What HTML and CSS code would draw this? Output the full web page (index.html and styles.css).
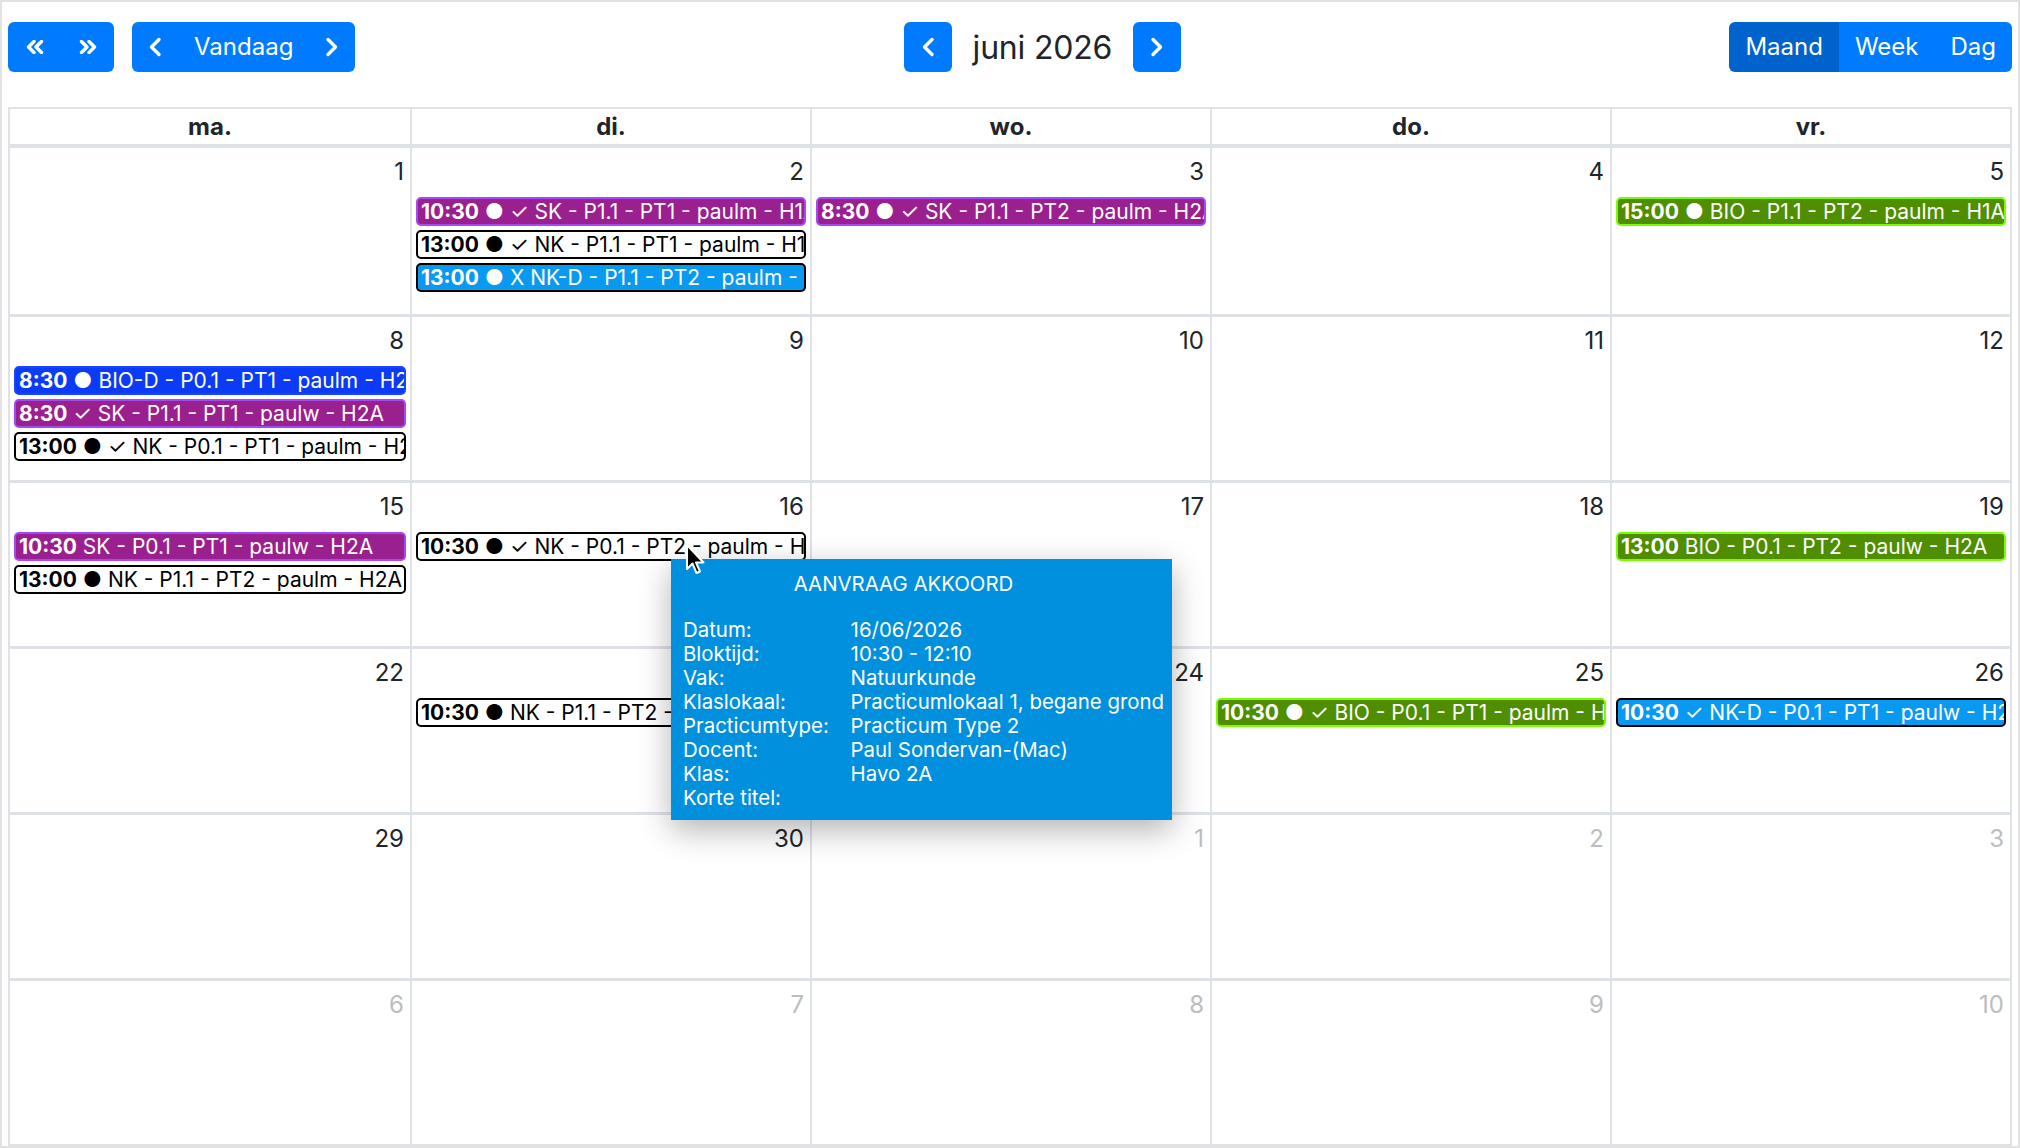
FILE: index.html
```html
<!DOCTYPE html>
<html lang="nl">
<head>
    <meta charset="UTF-8">
    <meta name="viewport" content="width=device-width, initial-scale=1.0">
    <title>Practicumplanner - juni 2026</title>
    <link rel="stylesheet" href="styles.css">
</head>
<body>
    <div class="page">
        <!-- Toolbar -->
        <div class="toolbar">
            <div class="btn-group">
                <button class="btn btn-icon" title="Vorig jaar">
                    <svg width="18" height="14" viewBox="0 0 18 14"><polyline points="8,1.5 2.5,7 8,12.5"/><polyline points="15.5,1.5 10,7 15.5,12.5"/></svg>
                </button>
                <button class="btn btn-icon" title="Volgend jaar">
                    <svg width="18" height="14" viewBox="0 0 18 14"><polyline points="2.5,1.5 8,7 2.5,12.5"/><polyline points="10,1.5 15.5,7 10,12.5"/></svg>
                </button>
            </div>
            <div class="btn-group group-today">
                <button class="btn btn-icon" title="Vorige">
                    <svg width="14" height="20" viewBox="0 0 14 20"><polyline points="11,2.5 3.5,10 11,17.5"/></svg>
                </button>
                <button class="btn">Vandaag</button>
                <button class="btn btn-icon" title="Volgende">
                    <svg width="14" height="20" viewBox="0 0 14 20"><polyline points="3,2.5 10.5,10 3,17.5"/></svg>
                </button>
            </div>

            <div class="title-bar">
                <button class="btn btn-icon btn-single" title="Vorige maand">
                    <svg width="14" height="20" viewBox="0 0 14 20"><polyline points="11,2.5 3.5,10 11,17.5"/></svg>
                </button>
                <h2 class="title">juni 2026</h2>
                <button class="btn btn-icon btn-single" title="Volgende maand">
                    <svg width="14" height="20" viewBox="0 0 14 20"><polyline points="3,2.5 10.5,10 3,17.5"/></svg>
                </button>
            </div>

            <div class="btn-group">
                <button class="btn active">Maand</button>
                <button class="btn">Week</button>
                <button class="btn">Dag</button>
            </div>
        </div>

        <!-- Month grid -->
        <div class="month">
            <div class="head">
                <div class="head-cell">ma.</div>
                <div class="head-cell">di.</div>
                <div class="head-cell">wo.</div>
                <div class="head-cell">do.</div>
                <div class="head-cell">vr.</div>
            </div>

            <div class="week">
                <div class="day"><div class="num">1</div></div>
                <div class="day"><div class="num">2</div>
                    <div class="event ev-purple"><b>10:30</b> ● ✓ SK - P1.1 - PT1 - paulm - H1A</div>
                    <div class="event ev-white"><b>13:00</b> ● ✓ NK - P1.1 - PT1 - paulm - H1A</div>
                    <div class="event ev-sky"><b>13:00</b> ● X NK-D - P1.1 - PT2 - paulm - H1A</div>
                </div>
                <div class="day"><div class="num">3</div>
                    <div class="event ev-purple"><b>8:30</b> ● ✓ SK - P1.1 - PT2 - paulm - H2A</div>
                </div>
                <div class="day"><div class="num">4</div></div>
                <div class="day"><div class="num">5</div>
                    <div class="event ev-green"><b>15:00</b> ● BIO - P1.1 - PT2 - paulm - H1A</div>
                </div>
            </div>

            <div class="week">
                <div class="day"><div class="num">8</div>
                    <div class="event ev-blue"><b>8:30</b> ● BIO-D - P0.1 - PT1 - paulm - H2A</div>
                    <div class="event ev-purple"><b>8:30</b> ✓ SK - P1.1 - PT1 - paulw - H2A</div>
                    <div class="event ev-white"><b>13:00</b> ● ✓ NK - P0.1 - PT1 - paulm - H2A</div>
                </div>
                <div class="day"><div class="num">9</div></div>
                <div class="day"><div class="num">10</div></div>
                <div class="day"><div class="num">11</div></div>
                <div class="day"><div class="num">12</div></div>
            </div>

            <div class="week">
                <div class="day"><div class="num">15</div>
                    <div class="event ev-purple"><b>10:30</b> SK - P0.1 - PT1 - paulw - H2A</div>
                    <div class="event ev-white"><b>13:00</b> ● NK - P1.1 - PT2 - paulm - H2A</div>
                </div>
                <div class="day"><div class="num">16</div>
                    <div class="event ev-white"><b>10:30</b> ● ✓ NK - P0.1 - PT2 - paulm - H2A</div>
                </div>
                <div class="day"><div class="num">17</div></div>
                <div class="day"><div class="num">18</div></div>
                <div class="day"><div class="num">19</div>
                    <div class="event ev-green"><b>13:00</b> BIO - P0.1 - PT2 - paulw - H2A</div>
                </div>
            </div>

            <div class="week">
                <div class="day"><div class="num">22</div></div>
                <div class="day"><div class="num">23</div>
                    <div class="event ev-white"><b>10:30</b> ● NK - P1.1 - PT2 - paulm - H2A</div>
                </div>
                <div class="day"><div class="num">24</div></div>
                <div class="day"><div class="num">25</div>
                    <div class="event ev-green"><b>10:30</b> ● ✓ BIO - P0.1 - PT1 - paulm - H2A</div>
                </div>
                <div class="day"><div class="num">26</div>
                    <div class="event ev-sky"><b>10:30</b> ✓ NK-D - P0.1 - PT1 - paulw - H2A</div>
                </div>
            </div>

            <div class="week">
                <div class="day"><div class="num">29</div></div>
                <div class="day"><div class="num">30</div></div>
                <div class="day other"><div class="num">1</div></div>
                <div class="day other"><div class="num">2</div></div>
                <div class="day other"><div class="num">3</div></div>
            </div>

            <div class="week">
                <div class="day other"><div class="num">6</div></div>
                <div class="day other"><div class="num">7</div></div>
                <div class="day other"><div class="num">8</div></div>
                <div class="day other"><div class="num">9</div></div>
                <div class="day other"><div class="num">10</div></div>
            </div>
        </div>

        <!-- Hover tooltip for the 16 June booking -->
        <div class="tooltip">
            <div class="tooltip-title">AANVRAAG AKKOORD</div>
            <table class="tooltip-table">
                <tr><td>Datum:</td><td>16/06/2026</td></tr>
                <tr><td>Bloktijd:</td><td>10:30 - 12:10</td></tr>
                <tr><td>Vak:</td><td>Natuurkunde</td></tr>
                <tr><td>Klaslokaal:</td><td>Practicumlokaal 1, begane grond</td></tr>
                <tr><td>Practicumtype:</td><td>Practicum Type 2</td></tr>
                <tr><td>Docent:</td><td>Paul Sondervan-(Mac)</td></tr>
                <tr><td>Klas:</td><td>Havo 2A</td></tr>
                <tr><td>Korte titel:</td><td></td></tr>
            </table>
        </div>

        <!-- Mouse pointer -->
        <svg class="pointer" width="22" height="34" viewBox="0 0 22 34">
            <path d="M2 2 L2 26 L7.5 20.5 L11.5 30 L15 28.5 L11 19.5 L18.5 19.5 Z" fill="#000" stroke="#fff" stroke-width="2" stroke-linejoin="round"/>
        </svg>
    </div>
</body>
</html>
```

FILE: styles.css
```css
body {
    margin: 0;
    font-family: Inter, "Noto Sans", sans-serif;
    color: #212529;
    background: #fff;
}

.page {
    position: relative;
    box-sizing: border-box;
    height: 1148px;
    border: 2px solid #e2e2e2;
    padding: 20px 6px 0 6px;
    overflow: hidden;
}

/* Toolbar */
.toolbar {
    display: flex;
    justify-content: space-between;
    align-items: center;
    height: 50px;
    margin-bottom: 35px;
}

.toolbar > .btn-group:first-child {
    margin-right: 18px;
}

.group-today {
    margin-right: auto;
}

.btn-group {
    display: flex;
}

.btn {
    height: 50px;
    padding: 0 16px;
    border: none;
    background-color: #007bff;
    color: #fff;
    font-family: inherit;
    font-size: 24px;
    line-height: 50px;
    cursor: pointer;
}

.btn-group .btn:first-child {
    border-radius: 6px 0 0 6px;
}

.btn-group .btn:last-child {
    border-radius: 0 6px 6px 0;
}

.btn.active {
    background-color: #0062cc;
}

.btn-icon {
    display: flex;
    align-items: center;
    justify-content: center;
}

.btn-group:first-child .btn-icon {
    width: 53px;
    padding: 0;
}

.btn svg polyline {
    fill: none;
    stroke: #fff;
    stroke-width: 3.4;
    stroke-linecap: round;
    stroke-linejoin: round;
}

.btn-single {
    width: 48px;
    padding: 0;
    border-radius: 6px;
}

.title-bar {
    display: flex;
    align-items: center;
    gap: 21px;
    margin-right: auto;
}

.title {
    margin: 0;
    font-size: 32px;
    font-weight: 400;
    letter-spacing: -0.2px;
}

/* Month grid */
.month {
    border: 2px solid #dee2e6;
}

.head {
    display: grid;
    grid-template-columns: repeat(5, 1fr);
    border-bottom: 4px solid #dee2e6;
}

.head-cell {
    height: 35px;
    line-height: 35px;
    text-align: center;
    font-size: 24px;
    font-weight: 700;
}

.head-cell + .head-cell {
    border-left: 2px solid #dee2e6;
}

.week {
    display: grid;
    grid-template-columns: repeat(5, 1fr);
    box-sizing: border-box;
    height: 166px;
}

.week + .week {
    border-top: 3px solid #dee2e6;
}

.day {
    min-width: 0;
    overflow: hidden;
}

.day + .day {
    border-left: 2px solid #dee2e6;
}

.num {
    padding: 9px 6px 0 0;
    text-align: right;
    font-size: 24px;
    line-height: 30px;
    margin-bottom: 10px;
}

.other .num {
    color: #bcbdbe;
}

/* Events */
.event {
    margin: 0 4px 4px 4px;
    padding: 0 3px;
    height: 25px;
    line-height: 25px;
    border: 2px solid;
    border-radius: 5px;
    font-size: 21px;
    white-space: nowrap;
    overflow: hidden;
    color: #fff;
}

.event b {
    font-weight: 700;
}

.ev-purple {
    background-color: #9a1f8f;
    border-color: #a548f5;
}

.ev-white {
    background-color: #fff;
    border-color: #000;
    color: #000;
}

.ev-sky {
    background-color: #0a99f0;
    border-color: #000;
}

.ev-blue {
    background-color: #0b3bf5;
    border-color: #1844ff;
}

.ev-green {
    background-color: #4e8e00;
    border-color: #7cfc00;
}

/* Tooltip */
.tooltip {
    position: absolute;
    left: 669px;
    top: 557px;
    width: 501px;
    height: 261px;
    box-sizing: border-box;
    padding: 13px 8px 0 12px;
    background-color: #0090dd;
    color: #fff;
    box-shadow: 0 10px 30px rgba(0, 0, 0, 0.3);
    font-size: 20.4px;
}

.tooltip-title {
    line-height: 24px;
    text-align: center;
    padding-right: 40px;
    margin-bottom: 22px;
}

.tooltip-table {
    border-collapse: collapse;
}

.tooltip-table td {
    padding: 0;
    height: 24px;
    line-height: 24px;
    white-space: nowrap;
}

.tooltip-table td:first-child {
    width: 171px;
}

.pointer {
    position: absolute;
    left: 683px;
    top: 541px;
}
```
